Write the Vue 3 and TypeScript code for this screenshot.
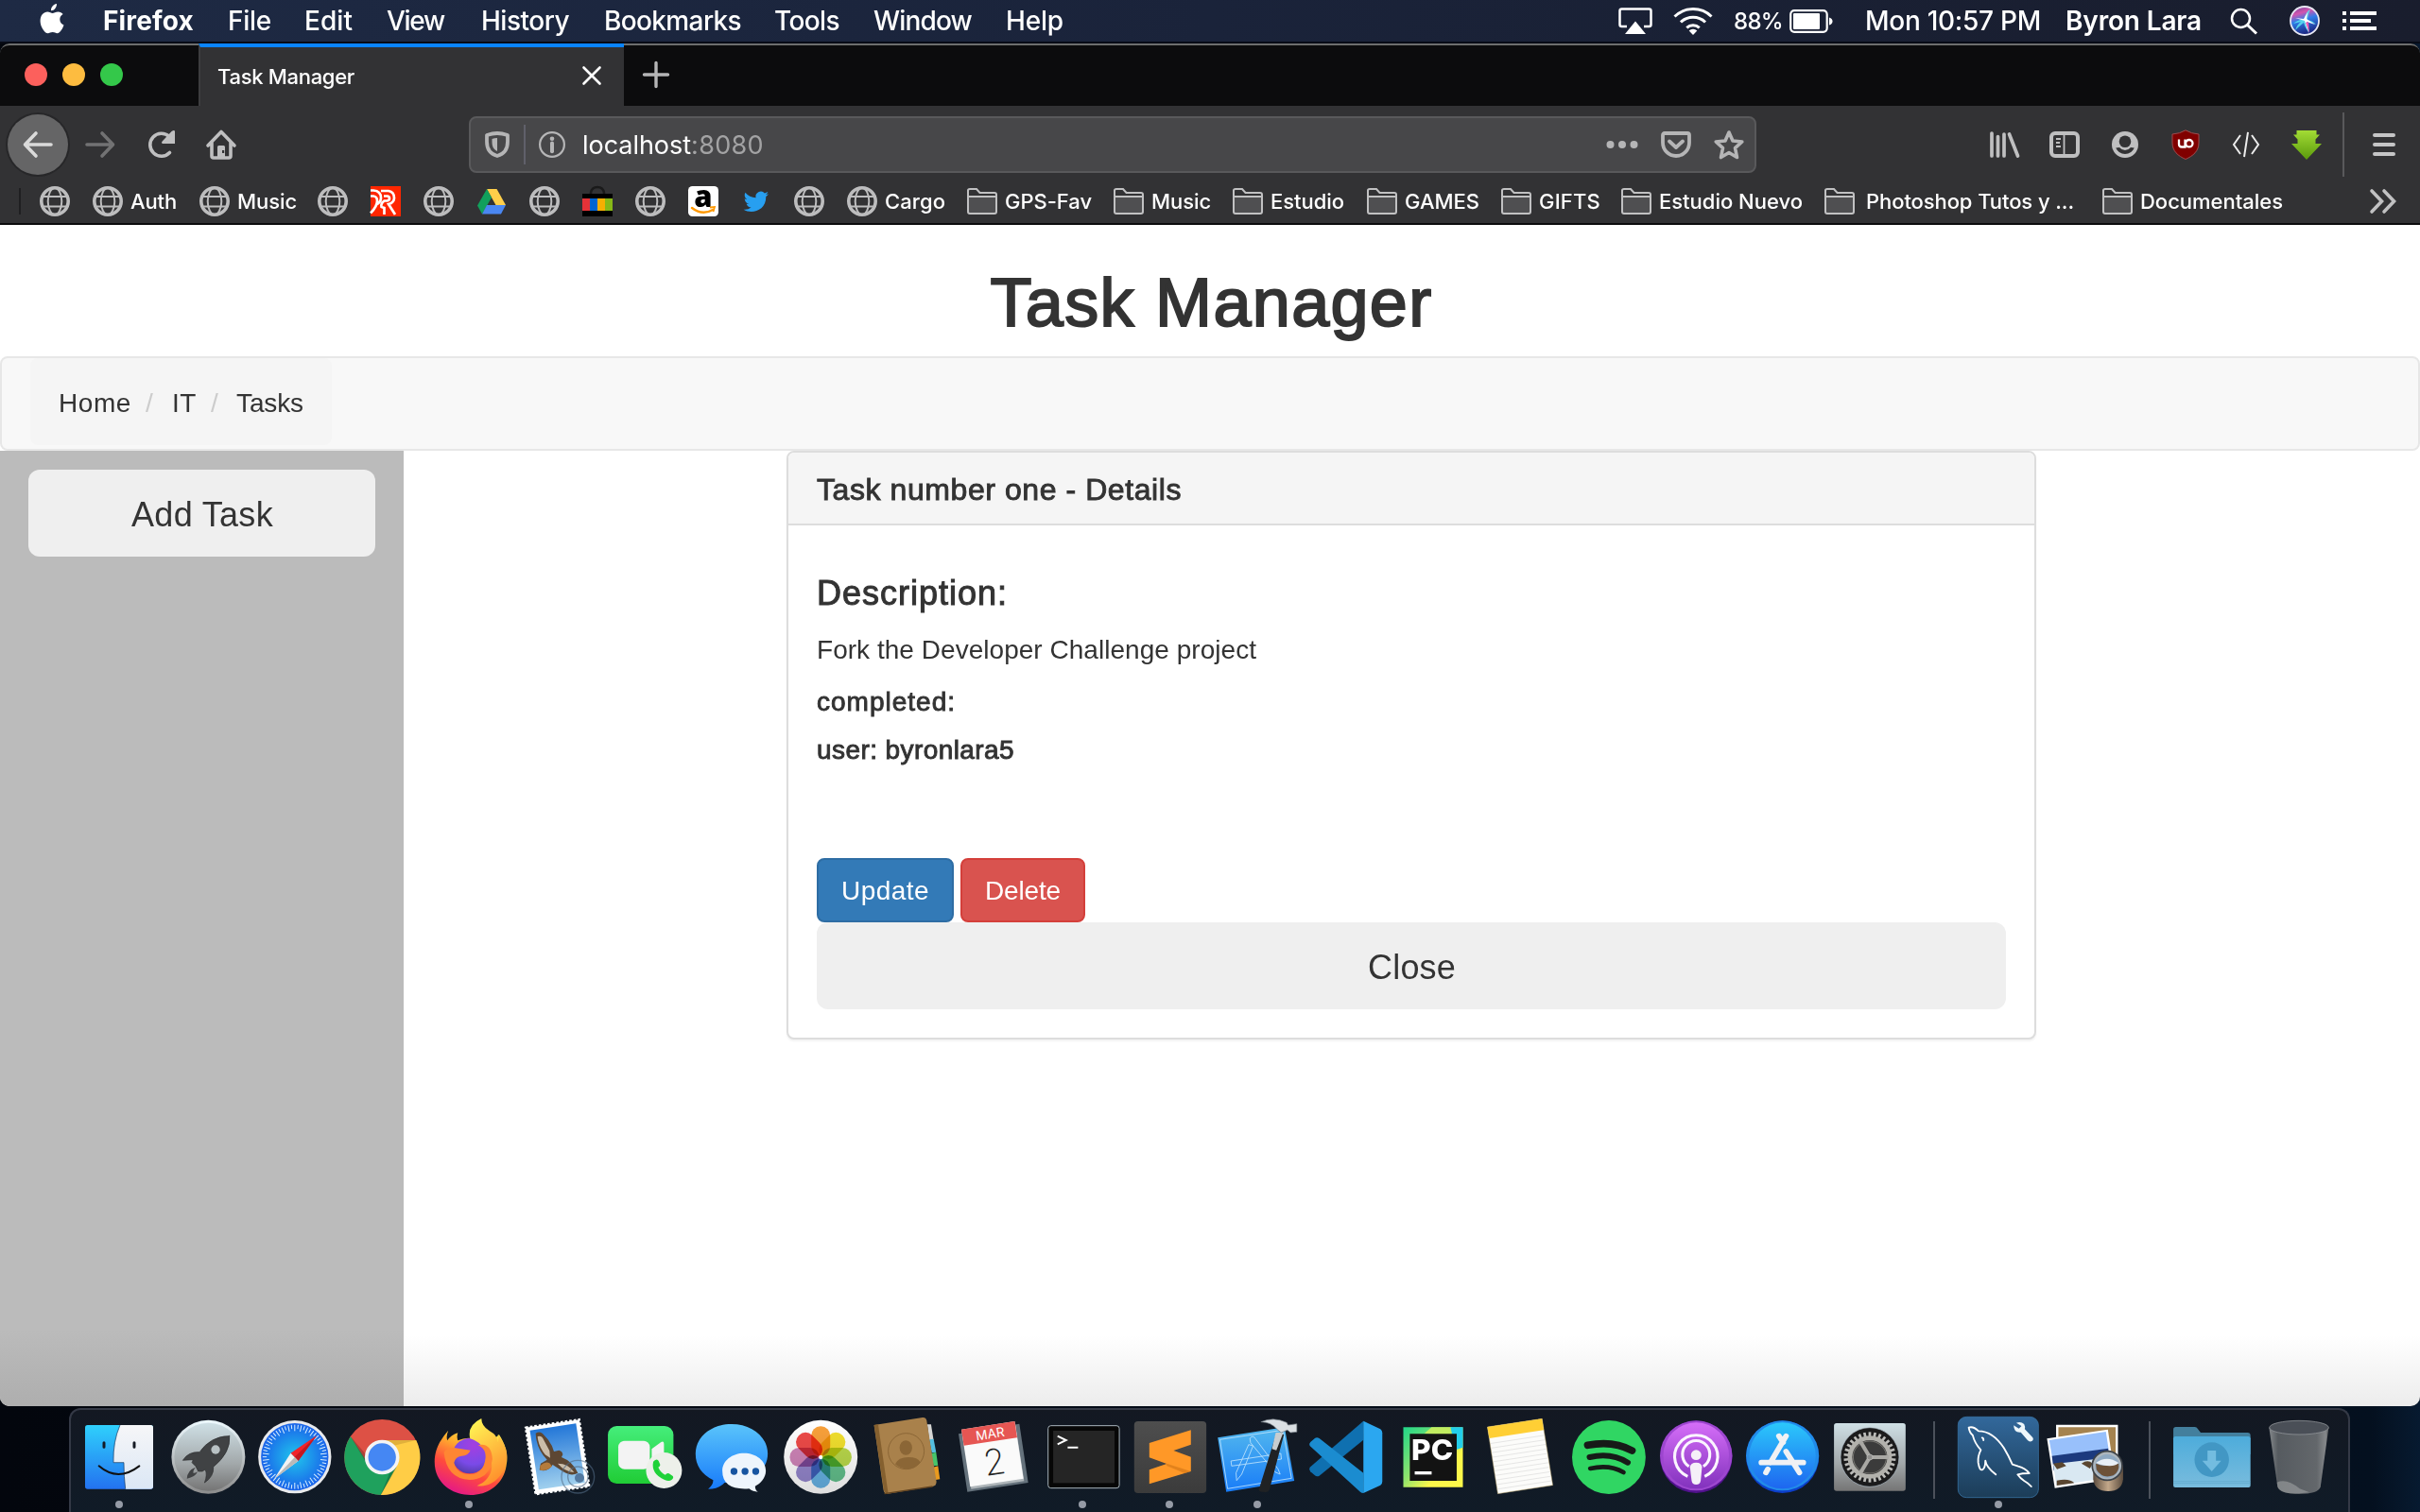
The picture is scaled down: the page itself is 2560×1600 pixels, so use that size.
<script setup lang="ts">
interface MenuItem {
  label: string
  width: number
  slot: number
}

interface Bookmark {
  icon: string
  pitch: number
  label?: string
  width?: number
  indent?: number
}

const menus: MenuItem[] = [
  { label: 'Firefox', width: 96, slot: 132 },
  { label: 'File', width: 46, slot: 81 },
  { label: 'Edit', width: 51, slot: 87 },
  { label: 'View', width: 61, slot: 100 },
  { label: 'History', width: 93, slot: 130 },
  { label: 'Bookmarks', width: 145, slot: 180 },
  { label: 'Tools', width: 69, slot: 105 },
  { label: 'Window', width: 104, slot: 140 },
  { label: 'Help', width: 61, slot: 70 },
]

const bookmarks: Bookmark[] = [
  { icon: 'globe', pitch: 56 },
  { icon: 'globe', pitch: 113, label: 'Auth', width: 49 },
  { icon: 'globe', pitch: 125, label: 'Music', width: 63 },
  { icon: 'globe', pitch: 56 },
  { icon: 'rr', pitch: 56 },
  { icon: 'globe', pitch: 56 },
  { icon: 'drive', pitch: 56 },
  { icon: 'globe', pitch: 56 },
  { icon: 'ebay', pitch: 56 },
  { icon: 'globe', pitch: 56 },
  { icon: 'amazon', pitch: 56 },
  { icon: 'twitter', pitch: 56 },
  { icon: 'globe', pitch: 56 },
  { icon: 'globe', pitch: 127, label: 'Cargo', width: 64 },
  { icon: 'folder', pitch: 155, label: 'GPS-Fav', width: 92 },
  { icon: 'folder', pitch: 126, label: 'Music', width: 63 },
  { icon: 'folder', pitch: 142, label: 'Estudio', width: 78 },
  { icon: 'folder', pitch: 142, label: 'GAMES', width: 79 },
  { icon: 'folder', pitch: 127, label: 'GIFTS', width: 65 },
  { icon: 'folder', pitch: 215, label: 'Estudio Nuevo', width: 152 },
  { icon: 'folder', pitch: 294, label: 'Photoshop Tutos y ...', width: 220, indent: 4 },
  { icon: 'folder', pitch: 200, label: 'Documentales', width: 151 },
]

const crumbs: MenuItem[] = [
  { label: 'Home', width: 77, slot: 92 },
  { label: '/', width: 9, slot: 28 },
  { label: 'IT', width: 26, slot: 41 },
  { label: '/', width: 9, slot: 27 },
  { label: 'Tasks', width: 71, slot: 71 },
]

const safariTicks = Array.from({ length: 60 }, (_, i) => i * 6)
const gearTeeth = Array.from({ length: 30 }, (_, i) => i * 12)
const petals = [
  ['#f9a13a', 0], ['#f2e02e', 45], ['#b9d84a', 90], ['#63c08c', 135],
  ['#66b2e4', 180], ['#9486cc', 225], ['#cf84b8', 270], ['#ee4a48', 315],
] as const

// Tracks a label out (or in) until it spans the given width.
const vFit = {
  mounted(el: HTMLElement, binding: { value: number }) {
    const natural = el.getBoundingClientRect().width
    const count = (el.textContent ?? '').trim().length
    if (count > 0) el.style.letterSpacing = `${(binding.value - natural) / count}px`
  },
}
</script>

<template>
  <div class="desktop">
    <header class="menubar">
      <svg class="apple" viewBox="0 0 26 32">
        <path fill="#fff" d="M18 0c.3 3.400-2.600 7.300-6 7.300C11.700 3.800 14.700.4 18 0zM24.600 11c-2 1.200-3.300 3.100-3.300 5.600 0 2.900 1.700 5 4.200 6-1 3.200-3.900 8.700-6.900 8.700-1.900 0-2.600-1.200-4.900-1.200-2.300 0-3.200 1.200-5 1.200C5.300 31.300.6 24.400.6 18.200.6 12 4.400 8.600 8.200 8.600c2.300 0 4 1.500 5.400 1.500 1.300 0 3.300-1.600 6-1.600 2 0 3.900.9 5 2.500z" />
      </svg>
      <nav class="menus">
        <span v-for="(m, i) in menus" :key="m.label" class="slot" :style="{ width: m.slot + 'px' }">
          <span v-fit="m.width" :class="{ strong: i === 0 }">{{ m.label }}</span>
        </span>
      </nav>
      <div class="status">
        <svg class="airplay" viewBox="0 0 36 28"><path d="M9 20H3.500Q1.500 20 1.500 18V3.500Q1.500 1.500 3.500 1.500h29q2 0 2 2V18q0 2-2 2H27" fill="none" stroke="#fff" stroke-width="2.500" /><path d="M18 14.500 29 28H7z" fill="#fff" /></svg>
        <svg class="wifi" viewBox="0 0 42 30"><g fill="none" stroke="#fff" stroke-width="3"><path d="M1.500 10.500a28 28 0 0 1 39 0" /><path d="M8 16.500a19 19 0 0 1 26 0" /><path d="M14.300 22.300a10 10 0 0 1 13.400 0" /></g><path d="M21 30l-4.300-4.600a6.500 6.500 0 0 1 8.600 0z" fill="#fff" /></svg>
        <span class="percent" v-fit="52">88%</span>
        <svg class="battery" viewBox="0 0 46 25"><rect x="1.200" y="1.200" width="38.500" height="22.600" rx="4" fill="none" stroke="#fff" stroke-width="2.200" /><rect x="4" y="4" width="28" height="17" rx="1" fill="#fff" /><path d="M42 8.500q3.500 1 3.500 4t-3.500 4z" fill="#fff" /></svg>
        <span class="clock" v-fit="186">Mon 10:57 PM</span>
        <span class="user" v-fit="144">Byron Lara</span>
        <svg class="search" viewBox="0 0 30 29"><circle cx="11.500" cy="11.500" r="9.500" fill="none" stroke="#fff" stroke-width="2.500" /><path d="M18.500 18.500 28 27.500" stroke="#fff" stroke-width="3" /></svg>
        <svg class="siri" viewBox="0 0 32 32">
          <defs><linearGradient id="siri" x1="0" y1="0" x2=".3" y2="1"><stop offset="0" stop-color="#5b3f9c" /><stop offset=".3" stop-color="#d455ae" /><stop offset=".55" stop-color="#2f7dea" /><stop offset="1" stop-color="#1c2a86" /></linearGradient></defs>
          <circle cx="16" cy="16" r="15" fill="url(#siri)" stroke="#e8e8f4" stroke-width="1.800" />
          <path d="M4 19q7-5 11-4Q18 5 22 4q-3 7-3 11 6 1 9 5-6-3-10-3 1 7 3 12-5-6-6-11-5 4-9 8 2-6 6-9z" fill="#5de3ee" opacity=".85" /><path d="m16 16 4 13-2-12 9 3-9-6 1-7-4 7-9-1z" fill="#fff" /><path d="m17 18 4 11-1-12z" fill="#f05ab6" />
        </svg>
        <svg class="list" viewBox="0 0 36 20"><path fill="#fff" d="M0 0h4v4H0zM0 8h4v4H0zM0 16h4v4H0zM8 0h28v4H8zM8 8h22v4H8zM8 16h28v4H8z" /></svg>
      </div>
    </header>

    <main class="window">
      <div class="tabstrip">
        <div class="lights"><i class="red"></i><i class="amber"></i><i class="green"></i></div>
        <div class="tab">
          <span v-fit="145">Task Manager</span>
          <svg class="tabclose" viewBox="0 0 20 20"><path d="m1.500 1.500 17 17m0-17-17 17" stroke="#fff" stroke-width="2.600" stroke-linecap="round" /></svg>
        </div>
        <svg class="plus" viewBox="0 0 28 28"><path d="M14 1.500v25M1.500 14h25" stroke="#b5b5b6" stroke-width="3.400" stroke-linecap="round" /></svg>
      </div>

      <div class="toolbar">
        <span class="back"><svg viewBox="0 0 32 32"><path d="M30 16H3m11-12L2.500 16 14 28" class="line" stroke="#dadada" /></svg></span>
        <svg class="tool forward" viewBox="0 0 32 32"><path d="M2 16h27M18 4l11.500 12L18 28" class="line" stroke="#727273" /></svg>
        <svg class="tool reload" viewBox="0 0 32 32"><path d="M25.500 24.500A12 12 0 1 1 25 7.500" class="line" stroke="#bfbfc0" stroke-width="4" /><path d="M31 2.500V15H18.500c-1.800 0-1.800-1.500-.8-2.400L27.500 2q3.500-2 3.500.5z" fill="#bfbfc0" /></svg>
        <svg class="tool home" viewBox="0 0 32 32"><path d="M2 17 16 2.500 30 17M6 14v14q0 2 2 2h16q2 0 2-2V14" class="line" stroke="#bfbfc0" stroke-width="4" /><path d="M12 30V18.500q0-1.500 1.500-1.500h5q1.500 0 1.500 1.500V30z" fill="#bfbfc0" /><path d="M17 22h2.200v3H17z" fill="#323234" /></svg>

        <div class="urlbar">
          <svg class="shield" viewBox="0 0 26 28"><path d="M2 4Q8 2 13 2t11 2v7c0 8-4 13-11 15C6 24 2 19 2 11z" fill="none" stroke="#b5b5b6" stroke-width="3.800" stroke-linejoin="round" /><path d="M13 7v14c-4-2-5.500-5-5.500-10V8Q10 7 13 7z" fill="#b5b5b6" /></svg>
          <i class="divider"></i>
          <svg class="info" viewBox="0 0 28 28"><circle cx="14" cy="14" r="12.900" fill="none" stroke="#b5b5b6" stroke-width="2.200" /><circle cx="14" cy="7.700" r="2.300" fill="#b5b5b6" /><path d="M14 12.500v8.700" stroke="#b5b5b6" stroke-width="4" stroke-linecap="round" /></svg>
          <span class="host" v-fit="115">localhost</span><span class="port" v-fit="77">:8080</span>
          <svg class="dots" viewBox="0 0 34 10"><g fill="#b5b5b6"><circle cx="4.500" cy="5" r="4" /><circle cx="17" cy="5" r="4" /><circle cx="29.500" cy="5" r="4" /></g></svg>
          <svg class="pocket" viewBox="0 0 32 28"><path d="M4 2h24q2 0 2 2v8a14 14 0 0 1-28 0V4q0-2 2-2z" fill="none" stroke="#b5b5b6" stroke-width="3.800" /><path d="m9 10.500 7 6.500 7-6.500" fill="none" stroke="#b5b5b6" stroke-width="3.800" stroke-linecap="round" stroke-linejoin="round" /></svg>
          <svg class="star" viewBox="0 0 32 32"><path d="m16 3 4 9 9.800 1-7.300 6.600 2 9.900-8.500-5-8.500 5 2-9.900L2.200 13l9.800-1z" fill="none" stroke="#b5b5b6" stroke-width="3.600" stroke-linejoin="round" /></svg>
        </div>

        <svg class="library" viewBox="0 0 32 28"><g stroke="#bfbfc0" stroke-width="3.700" stroke-linecap="round"><path d="M2 2v24M8.500 5.500V26M15 3v23M20.500 3l9 23" /></g></svg>
        <svg class="side" viewBox="0 0 32 28"><rect x="2" y="2" width="28" height="24" rx="4" fill="none" stroke="#bfbfc0" stroke-width="4" /><path d="M15.500 3v22" stroke="#bfbfc0" stroke-width="1.800" /><path d="M7 8h5M7 12h4M7 16h5" stroke="#bfbfc0" stroke-width="2" /></svg>
        <svg class="account" viewBox="0 0 28 28"><circle cx="14" cy="14" r="14" fill="#bfbfc0" /><circle cx="14" cy="10.800" r="6.300" fill="#323234" /><path d="M4.200 17.500Q6 17 8 17q2.500 3 6 3t6-3q2 0 3.800.5-3 6.500-9.800 6.500t-9.800-6.500z" fill="#323234" /></svg>
        <svg class="ublock" viewBox="0 0 30 32"><path d="M15 .8Q21 4.500 29 5v9c0 9-6 14-14 17.500C7 28 1 23 1 14V5Q9 4.500 15 .8z" fill="#800000" stroke="#a04a4c" stroke-width="1" /><path d="M8 10.500v5q0 3 3 3h3.500v-8" fill="none" stroke="#fff" stroke-width="2.300" /><circle cx="18.800" cy="14.700" r="3.700" fill="none" stroke="#fff" stroke-width="2.300" /></svg>
        <svg class="code" viewBox="0 0 30 28"><path d="M9 4 2 14l7 10M21 4l7 10-7 10M17 .8 13 27" fill="none" stroke="#ececec" stroke-width="2" /></svg>
        <svg class="green-arrow" viewBox="0 0 32 31"><defs><linearGradient id="ga" x1="0" y1="0" x2="0" y2="1"><stop offset="0" stop-color="#a3dc35" /><stop offset="1" stop-color="#5a9a0c" /></linearGradient></defs><path d="M5.500 0h21v4.500H30l-4.500 5v4.500H32L16 31 0 14h6.500V9.500L2 4.500h3.500z" fill="url(#ga)" /></svg>
        <i class="tooldivider"></i>
        <svg class="burger" viewBox="0 0 24 24"><path d="M2 2h20M2 12h20M2 22h20" stroke="#c5c5c6" stroke-width="4" stroke-linecap="round" /></svg>
      </div>

      <div class="bookmarks">
        <i class="bmdivider"></i>
        <div v-for="(b, i) in bookmarks" :key="i" class="bookmark" :style="{ width: b.pitch + 'px' }">
          <svg v-if="b.icon === 'globe'" viewBox="0 0 32 32"><g fill="none" stroke="#bdbdbe" stroke-width="2"><circle cx="16" cy="16" r="14.200" stroke-width="3.600" /><ellipse cx="16" cy="16" rx="7.300" ry="14" /><path d="M3 11h26M3 21.500h26" /></g></svg>
          <svg v-else-if="b.icon === 'folder'" viewBox="0 0 32 32"><path d="M1 10.500h30V27q0 2-2 2H3q-2 0-2-2z" fill="#4f4f51" /><path d="M1 27V4.500Q1 3 3 3h7l3.500 4H29q2 0 2 2v18q0 2-2 2H3q-2 0-2-2zM1 11h30" fill="none" stroke="#c1c1c2" stroke-width="2" /></svg>
          <svg v-else-if="b.icon === 'rr'" viewBox="0 0 32 32"><path fill="#ff2600" d="M0 0h32v32H0z" /><g fill="none" stroke="#fff" stroke-width="2.700"><path d="M0 4.500h3q8 .5 8 8 0 4-4 6.500M0 10.500h3q4 .5 4 5 0 6-7 13M11 5h8q6 1 6 7.500 0 5-6 6.500L26 30M14 10.500h4q2 .5 2 2.500t-2.500 2.500h-3q-4 3-3 6.500l3 1V30" /></g></svg>
          <svg v-else-if="b.icon === 'drive'" viewBox="0 0 32 32"><path d="M11 3h10.500L31 20H20.500z" fill="#ffcf4a" /><path d="M11 3 1 20.500 6 29.500 16 12z" fill="#11a05c" /><path d="M11 20h20l-5 9.500H6z" fill="#4a87f2" /></svg>
          <svg v-else-if="b.icon === 'ebay'" viewBox="0 0 32 32"><path d="M9 10V7q1-6 7-6t7 6v3" fill="none" stroke="#1a1a1a" stroke-width="2.500" /><path fill="#000" d="M0 8h32v24H0z" /><path fill="#e53238" d="M0 13h8v13H0z" /><path fill="#0064d2" d="M8 13h8v13H8z" /><path fill="#f5af02" d="M16 13h8v13h-8z" /><path fill="#86b817" d="M24 13h8v13h-8z" /></svg>
          <svg v-else-if="b.icon === 'amazon'" viewBox="0 0 32 32"><rect width="32" height="32" rx="4.500" fill="#fff" /><text x="16" y="22" text-anchor="middle" font-family="Open Sans, sans-serif" font-weight="800" font-size="31">a</text><path d="M4 23q11 8.500 22 2" fill="none" stroke="#f90" stroke-width="2.500" stroke-linecap="round" /><path d="m23 22.500 5-.5-1.500 5" fill="none" stroke="#f90" stroke-width="1.800" /></svg>
          <svg v-else viewBox="0 0 32 32"><path d="M29 8.200c-1 .4-2 .7-3.100.9 1.100-.7 2-1.700 2.400-3-1 .6-2.200 1.100-3.400 1.300a5.400 5.400 0 0 0-9.300 4.900C11.100 12.100 7.100 10 4.400 6.700c-1.400 2.400-.7 5.600 1.700 7.200-.9 0-1.700-.3-2.400-.7 0 2.600 1.800 4.800 4.300 5.400-.8.2-1.600.2-2.400.1.700 2.200 2.700 3.700 5 3.800A10.800 10.800 0 0 1 2.600 24.700c8 5.100 23.800 1.900 23.700-13.700 1.100-.8 2-1.700 2.700-2.800z" fill="#279ff0" /></svg>
          <span v-if="b.label" v-fit="b.width ?? 0" :class="{ indented: b.indent }">{{ b.label }}</span>
        </div>
        <svg class="more" viewBox="0 0 28 26"><path d="m2 2 10.500 11L2 24M15 2l10.500 11L15 24" fill="none" stroke="#c1c1c2" stroke-width="3.600" stroke-linecap="round" /></svg>
      </div>

      <div class="page">
        <h1><span v-fit="468">Task Manager</span></h1>
        <nav class="navbar">
          <div class="breadcrumb">
            <span v-for="(c, i) in crumbs" :key="i" class="slot" :style="{ width: c.slot + 'px' }"><span v-fit="c.width" :class="{ slash: c.label === '/' }">{{ c.label }}</span></span>
          </div>
        </nav>
        <div class="columns">
          <aside class="sidebar"><button class="big"><span v-fit="150">Add Task</span></button></aside>
          <section class="panel">
            <div class="panel-heading"><span v-fit="386">Task number one - Details</span></div>
            <div class="panel-body">
              <h3><span v-fit="202">Description:</span></h3>
              <p><span v-fit="465">Fork the Developer Challenge project</span></p>
              <h5><span v-fit="147">completed:</span></h5>
              <h5 class="owner"><span v-fit="209">user: byronlara5</span></h5>
              <div class="actions">
                <button class="btn update"><span v-fit="93">Update</span></button>
                <button class="btn delete"><span v-fit="80">Delete</span></button>
              </div>
              <button class="big"><span v-fit="93">Close</span></button>
            </div>
          </section>
        </div>
      </div>
    </main>

    <footer class="dock">
      <svg width="0" height="0" class="defs">
        <defs>
          <linearGradient id="fd1" x1="0" y1="0" x2="0" y2="1"><stop offset="0" stop-color="#2fd0fc" /><stop offset="1" stop-color="#2372f0" /></linearGradient>
          <linearGradient id="fd2" x1="0" y1="0" x2="0" y2="1"><stop offset="0" stop-color="#f6f6f8" /><stop offset="1" stop-color="#dbe7f5" /></linearGradient>
          <linearGradient id="gray" x1="0" y1="0" x2="0" y2="1"><stop offset="0" stop-color="#cfe0e6" /><stop offset=".6" stop-color="#a2a8aa" /><stop offset="1" stop-color="#757575" /></linearGradient>
          <linearGradient id="rim" x1="0" y1="0" x2="0" y2="1"><stop offset="0" stop-color="#eefaff" /><stop offset="1" stop-color="#8c8c8c" /></linearGradient>
          <radialGradient id="saf"><stop offset="0" stop-color="#20c6ec" /><stop offset="1" stop-color="#1a63ea" /></radialGradient>
          <linearGradient id="fx" x1=".8" y1="0" x2=".3" y2="1"><stop offset="0" stop-color="#fff44f" /><stop offset=".35" stop-color="#ffac2d" /><stop offset=".65" stop-color="#ff4a3d" /><stop offset="1" stop-color="#e3168b" /></linearGradient>
          <linearGradient id="fy" x1=".3" y1="0" x2=".7" y2="1"><stop offset="0" stop-color="#fff153" /><stop offset="1" stop-color="#ff8a2a" /></linearGradient>
          <radialGradient id="fp" cx=".6" cy=".2" r=".9"><stop offset="0" stop-color="#a43fe0" /><stop offset=".6" stop-color="#7a4ae8" /><stop offset="1" stop-color="#4a3a9a" /></radialGradient>
          <linearGradient id="sky" x1="0" y1="0" x2="0" y2="1"><stop offset="0" stop-color="#2377d8" /><stop offset="1" stop-color="#a0d0ee" /></linearGradient>
          <linearGradient id="ft" x1="0" y1="0" x2="0" y2="1"><stop offset="0" stop-color="#45ee7b" /><stop offset="1" stop-color="#20cc35" /></linearGradient>
          <linearGradient id="msg" x1="0" y1="0" x2="0" y2="1"><stop offset="0" stop-color="#5ac4fb" /><stop offset="1" stop-color="#187bfa" /></linearGradient>
          <linearGradient id="white" x1="0" y1="0" x2="0" y2="1"><stop offset="0" stop-color="#fff" /><stop offset="1" stop-color="#dedede" /></linearGradient>
          <linearGradient id="sub" x1="0" y1="0" x2="0" y2="1"><stop offset="0" stop-color="#4e4e4e" /><stop offset="1" stop-color="#3b3b3b" /></linearGradient>
          <linearGradient id="xc" x1="0" y1="0" x2="0" y2="1"><stop offset="0" stop-color="#53b8ee" /><stop offset="1" stop-color="#187cf8" /></linearGradient>
          <linearGradient id="pc" x1="0" y1="0" x2="1" y2="1"><stop offset="0" stop-color="#21d789" /><stop offset=".45" stop-color="#8fe36c" /><stop offset=".7" stop-color="#fcf84a" /></linearGradient>
          <linearGradient id="pod" x1="0" y1="0" x2="0" y2="1"><stop offset="0" stop-color="#d56ef8" /><stop offset="1" stop-color="#8232bd" /></linearGradient>
          <linearGradient id="as" x1="0" y1="0" x2="0" y2="1"><stop offset="0" stop-color="#2bc8fb" /><stop offset="1" stop-color="#1e66f0" /></linearGradient>
          <linearGradient id="my" x1="0" y1="0" x2="0" y2="1"><stop offset="0" stop-color="#32689b" /><stop offset="1" stop-color="#1c3d58" /></linearGradient>
          <linearGradient id="dl" x1="0" y1="0" x2="0" y2="1"><stop offset="0" stop-color="#4dacdb" /><stop offset="1" stop-color="#79bcdd" /></linearGradient>
          <linearGradient id="tr" x1="0" y1="0" x2="1" y2="0"><stop offset="0" stop-color="#85898c" /><stop offset=".15" stop-color="#565b60" /><stop offset=".8" stop-color="#63676b" /><stop offset=".95" stop-color="#85888b" /><stop offset="1" stop-color="#5a5d60" /></linearGradient>
          <linearGradient id="can" x1="0" y1="0" x2="1" y2="0"><stop offset="0" stop-color="#5b4c3e" /><stop offset=".5" stop-color="#c3a88a" /><stop offset="1" stop-color="#5b4c3e" /></linearGradient>
        </defs>
      </svg>

      <div class="app running">
        <svg viewBox="54 72 288 288"><rect x="90" y="114" width="216" height="203" rx="8" fill="url(#fd1)" /><path d="M201 114h97q8 0 8 8v187q0 8-8 8h-80q-5-38-5-84h-33q-2-66 21-119z" fill="url(#fd2)" /><path d="M201 114q-23 53-21 119h33q0 46 5 84" fill="none" stroke="#14355c" stroke-width="2" /><path d="M150 170v14M246 170v14" stroke="#151a24" stroke-width="9" stroke-linecap="round" /><path d="M134 244q60 52 128 0" fill="none" stroke="#111" stroke-width="6" stroke-linecap="round" /></svg>
      </div>
      <div class="app">
        <svg viewBox="331.800 72 288 288"><circle cx="480" cy="215" r="117" fill="url(#rim)" /><circle cx="480" cy="215" r="108" fill="url(#gray)" /><path d="M548 148q-62 2-96 52-36-2-53 26l31-2q2 3-2 9l12 12 8 16 13 0 9-6q8 16-2 42 30-20 28-50 56-46 51-99z" fill="#404244" stroke="#2c2d2f" stroke-width="2" /><circle cx="503" cy="192" r="14" fill="#b8c1c4" /><path d="M439 248q-26 10-27 36 26-4 34-22-10 6-14 4 0-10 7-18z" fill="#404244" /></svg>
      </div>
      <div class="app">
        <svg viewBox="609.600 72 288 288"><circle cx="756" cy="215" r="116" fill="#e9eaec" /><circle cx="756" cy="215" r="107" fill="url(#saf)" /><g stroke="#d9efff" stroke-width="3"><path v-for="t in safariTicks" :key="t" :d="t % 12 ? 'M756 113v13' : 'M756 113v20'" :transform="`rotate(${t} 756 215)`" /></g><path d="m826 147-83 56 24 25z" fill="#f0232b" /><path d="m826 147-70 68 11 13z" fill="#c31820" /><path d="m690 286 53-83 24 25z" fill="#f2f2f2" /><path d="m690 286 66-70 11 12z" fill="#b9b9b9" /></svg>
      </div>
      <div class="app">
        <svg viewBox="887.400 72 288 288"><circle cx="1032" cy="216" r="120" fill="#dd5145" /><path d="M932 150a120 120 0 0 0 96 186l51-90-87-4z" fill="#1fa15d" /><path d="M1028 336A120 120 0 0 0 1140 162h-108l47 80z" fill="#ffcd46" /><path d="m1032 162 108 0-70 17z" fill="#a87b28" opacity=".35" /><path d="m932 150 47 80 2-22z" fill="#60201c" opacity=".35" /><path d="m1028 336 51-90-20 12z" fill="#0d4f2c" opacity=".4" /><circle cx="1032" cy="216" r="55" fill="#f4f4f4" /><circle cx="1032" cy="216" r="44" fill="#4587f3" /></svg>
      </div>
      <div class="app running">
        <svg viewBox="1165.200 72 288 288"><path d="M1244 131q-8 18-3 32 12-18 33-24-4 12 0 24 40-18 80 6 40-10 51-25 32 50 24 92c-14 130-200 130-226 20-10-50 10-90 41-125z" fill="url(#fx)" /><circle cx="1312" cy="212" r="56" fill="url(#fp)" /><path d="M1313 157q-10-42 36-64 0 24 26 40 26 14 26 36 4-14 0-26 38 50 26 88c-14 64-60 80-92 76 46-20 66-70 24-116q-20-28-46-34z" fill="url(#fy)" /><path d="M1230 200q10-14 32-14l52 8q-6 16-28 18-20 2-24 22 10 36 50 36 44 0 50-52 2-30-24-40 42-10 46 44-8 64-72 66-74-4-82-88z" fill="#ff8633" /></svg>
      </div>
      <div class="app">
        <svg viewBox="3 72 288 288"><g transform="rotate(-8.500 149 215)"><rect x="63" y="108" width="172" height="214" fill="#fff" stroke="#fff" stroke-width="7" stroke-dasharray="8 6" /><rect x="75" y="119" width="148" height="190" fill="url(#sky)" /></g><path d="M80 140q16-10 28 8 24 24 30 50l16-4q12 4 12 14l-4 8q36 14 52 50-24 14-56-10l-24-16q-18 26-42 16l4-20 20-12Q82 190 80 140z" fill="#5d4733" /><path d="M86 150q14-4 20 12l18 34 2 22-16-10q-22-28-24-58zM150 236q34 0 52 28-30-2-52-28z" fill="#cbbda9" /><path d="M94 243q16-16 30-8l8 10q-18 16-38 12z" fill="#b47b3c" /><g fill="none" stroke="#526b85" stroke-width="4" opacity=".6"><circle cx="214" cy="278" r="32" /><circle cx="214" cy="278" r="52" /></g><circle cx="219" cy="282" r="15" fill="#42648c" opacity=".8" /></svg>
      </div>
      <div class="app">
        <svg viewBox="280.800 72 288 288"><rect x="308" y="117" width="208" height="183" rx="28" fill="url(#ft)" /><rect x="341" y="164" width="100" height="90" rx="20" fill="#f3f3f3" /><path d="m447 190 30-22q9-4 9 6v66q-24-4-39-14z" fill="#f3f3f3" /><circle cx="486" cy="258" r="57" fill="#edf0ea" /><path d="M457 226q8-6 12 2l5 12q0 5-6 8 6 16 22 24 6-8 12-4l12 8q4 6-4 12-8 6-22 0-44-20-36-58z" fill="#1fd238" /></svg>
      </div>
      <div class="app">
        <svg viewBox="558.600 72 288 288"><path d="M702 111c64 0 115 40 115 94s-50 91-115 92h-22q-20 20-52 20 16-12 16-28-56-28-56-84c0-54 50-94 114-94z" fill="url(#msg)" /><path d="M742 203c38 0 69 24 69 56 0 24-18 42-34 49q0 12 9 18-16 0-28-10-85 6-85-57c0-32 31-56 69-56z" fill="#eef5fc" /><g fill="#1755a1"><circle cx="710" cy="261" r="11" /><circle cx="745" cy="261" r="11" /><circle cx="779" cy="261" r="11" /></g></svg>
      </div>
      <div class="app">
        <svg viewBox="836.400 72 288 288"><circle cx="984" cy="215" r="117" fill="url(#white)" /><g class="petals"><rect v-for="[color, angle] in petals" :key="angle" x="954" y="118" width="60" height="93" rx="29" :fill="color" :transform="`rotate(${angle} 984 216)`" /></g><circle cx="984" cy="216" r="6" fill="#fff" /></svg>
      </div>
      <div class="app">
        <svg viewBox="1114.200 72 288 288"><path d="m1324 112 12 0 8 50-14 0z" fill="#d6d6d4" /><path d="m1330 160 14-2 8 42-14 2z" fill="#55bfe0" /><path d="m1336 204 16-4 6 42-14 2z" fill="#45c46a" /><path d="m1342 248 16-4 6 42-14 2z" fill="#e89a1f" /><path d="m1155 114 154-24q11-1 13 10l31 194q0 12-12 15l-142 23q-12 1-14-12z" fill="#a9814b" /><path d="m1155 114 13-2 32 219q-12 1-14-12z" fill="#85602f" /><path d="m1188 332 153-23" stroke="#614320" stroke-width="4" /><circle cx="1257" cy="197" r="57" fill="none" stroke="#8b6636" stroke-width="3" /><ellipse cx="1256" cy="186" rx="20" ry="23" fill="#8b6636" /><path d="M1222 238q10-22 42-22 30 0 38 16-16 22-42 22-22-2-38-16z" fill="#8b6636" /></svg>
      </div>
      <div class="app">
        <svg viewBox="-48 72 288 288"><path d="m-18 142 193-32 28 187-193 29z" fill="#65727c" /><g transform="rotate(-8.700 90 206)"><rect x="6" y="122" width="170" height="184" fill="#aeb5b9" /><rect x="4" y="114" width="171" height="184" fill="#fafafa" /><rect x="4" y="114" width="171" height="52" fill="#e65653" /><text x="92" y="156" text-anchor="middle" font-size="41" fill="#fff">MAR</text><text x="92" y="272" text-anchor="middle" font-size="113" font-weight="200" fill="#222">2</text></g></svg>
      </div>
      <div class="app running">
        <svg viewBox="229.800 72 288 288"><rect x="265" y="116" width="226" height="198" rx="9" fill="#070707" stroke="#a9b5bd" stroke-width="3" /><rect x="281" y="132" width="195" height="166" fill="#252525" /><path d="m295 149 27 13-27 13M327 185h33" fill="none" stroke="#fff" stroke-width="6" /></svg>
      </div>
      <div class="app running">
        <svg viewBox="507.600 72 288 288"><rect x="540" y="102" width="229" height="228" rx="12" fill="url(#sub)" /><path d="m588 171 132-41v46l-55 19 55 20v46l-132 40v-45l55-19-55-20z" fill="#ff9827" /><path d="m643 236 77 25-20 6-57-24z" fill="#c66c12" opacity=".5" /></svg>
      </div>
      <div class="app running">
        <svg viewBox="785.400 72 288 288"><path d="m804 154 212-33 31 170-216 35z" fill="url(#xc)" /><g fill="none" stroke="#c0e5fc" stroke-width="2.500"><path d="m811 160 200-30 27 153-203 33zM846 228l158-24 2 18-158 22zM902 176l14 4-36 90-16 20-2-24zM906 156q10-12 18 2l60 80q14 16 18 32-18-4-26-18l-68-82z" /></g><path d="m990 140 24 4-46 176q-6 10-18 6-14 0-16-6z" fill="#202224" /><path d="m988 138 24 0-22 56-14-4z" fill="#c8cdd0" /><path d="M941 104q40-18 82 2l4 8 28-4v26l-20 2-10-8-20 8-12-10q-20-24-52-24z" fill="#dadfe3" stroke="#6f7880" stroke-width="2" /></svg>
      </div>
      <div class="app">
        <svg viewBox="1063.200 72 288 288"><path d="m1098 248 170-147v60l-140 114q-8 4-14-1l-14-12q-6-8-2-14z" fill="#0f70b0" /><path d="M1098 180q-4-6 2-12l14-12q6-4 14 0l140 110v64q-6 0-10-4z" fill="#1b8cd0" /><path d="m1268 101 54 26q6 4 6 12v154q0 8-6 12l-54 25z" fill="#2ba7f0" /></svg>
      </div>
      <div class="app">
        <svg preserveAspectRatio="none" viewBox="-95.800 72 278.800 288"><path d="M-45 121h183v190H-45z" fill="url(#pc)" /><path d="m20 140 22-19h62v30z" fill="#c2ec60" /><path d="M100 121h38v64l-22 8z" fill="#23ceea" /><path d="M-25 142h144v149H-25z" fill="#131313" /><text x="-20" y="226" font-size="91" font-weight="800" textLength="128" lengthAdjust="spacingAndGlyphs" fill="#fff">PC</text><path d="M-10 266h52" stroke="#fff" stroke-width="10" /></svg>
      </div>
      <div class="app">
        <svg preserveAspectRatio="none" viewBox="173.100 72 278.800 288"><path d="m215 120 168-26 33 211-169 27z" fill="#fcfcfa" stroke="#b09a60" stroke-width="1.500" /><path d="m215 120 168-26 5 36-167 26z" fill="#ffcf35" /><path v-for="n in 11" :key="n" d="m223 158 165-26" :transform="`translate(${n * 2} ${n * 14.500})`" stroke="#cfcfcf" stroke-width="1.500" /></svg>
      </div>
      <div class="app">
        <svg preserveAspectRatio="none" viewBox="442 72 278.800 288"><ellipse cx="587" cy="216" rx="113" ry="117" fill="#30d663" /><g fill="none" stroke="#171a18" stroke-linecap="round"><path d="M522 178q78-16 136 17" stroke-width="23" /><path d="M528 216q66-16 117 17" stroke-width="18" /><path d="M530 252q58-14 102 12" stroke-width="14" /></g></svg>
      </div>
      <div class="app">
        <svg preserveAspectRatio="none" viewBox="710.900 72 278.800 288"><ellipse cx="854" cy="215" rx="111" ry="115" fill="#51128d" /><ellipse cx="854" cy="211" rx="111" ry="111" fill="#9d46cf" /><ellipse cx="854" cy="211" rx="101" ry="105" fill="url(#pod)" /><g fill="none" stroke="#fbf5ff" stroke-width="9"><path d="M828 277a66 68 0 1 1 52 0" /><path d="M832 245a42 44 0 1 1 44 0" /></g><circle cx="854" cy="209" r="16" fill="#f5f0f8" /><path d="M835 247q2-14 19-14t18 14l-4 43q-2 13-14 13t-14-13z" fill="#f5f0f8" /></svg>
      </div>
      <div class="app">
        <svg preserveAspectRatio="none" viewBox="979.800 72 278.800 288"><ellipse cx="1121" cy="215" rx="112" ry="115" fill="#0d3fca" /><ellipse cx="1121" cy="211" rx="112" ry="111" fill="#218be9" /><ellipse cx="1121" cy="211" rx="102" ry="105" fill="url(#as)" /><g stroke="#f0f1f4" stroke-linecap="round" stroke-width="17"><path d="M1132 149 1084 233M1110 149l13 20M1132 198l41 67M1056 233h129M1076 254l-6 11" /></g></svg>
      </div>
      <div class="app">
        <svg preserveAspectRatio="none" viewBox="1248.700 72 278.800 288"><rect x="1278" y="108" width="220" height="215" rx="8" fill="url(#gray)" /><ellipse cx="1388" cy="216" rx="90" ry="94" fill="#1b1b1c" stroke="#b4c1cb" stroke-width="2" /><g stroke="#bcbcb9" stroke-width="8"><path v-for="a in gearTeeth" :key="a" d="M1388 136v15" :transform="`rotate(${a} 1388 216)`" /></g><circle cx="1388" cy="216" r="61" fill="#3b3b3b" stroke="#b2b1ac" stroke-width="14" /><circle cx="1388" cy="216" r="51" fill="none" stroke="#777671" stroke-width="3" /><path d="M1388 216h58M1388 216l-29-50M1388 216l-29 50" stroke="#a9a8a4" stroke-width="12" /><circle cx="1388" cy="216" r="9" fill="#91908e" stroke="#c5c5c2" stroke-width="2" /></svg>
      </div>
      <i class="sep"></i>
      <div class="app running">
        <svg preserveAspectRatio="none" viewBox="133.600 72 278.800 288"><rect x="149" y="88" width="247" height="256" rx="26" fill="url(#my)" stroke="#37709f" stroke-width="2.500" /><g fill="none" stroke="#fff" stroke-width="5.500" stroke-linejoin="round" stroke-linecap="round"><path d="M212 133q-16-16-30-11 2 16 12 24 6 26 25 47-10 20-8 40 4 28 14 22 8-6 8-28 2 20 32 44M212 133q44 0 78 54 14 24 26 52l18 6q22 6 34 22-22 0-36 4 8 12 20 20 14 8 22 18" /><path d="M223 154q5 2 4 8" /></g><path d="M328 107q14-6 24 4 4 8 2 16l22 24q8 8 0 14-8 4-14-4l-20-24q-22 2-22-22l16 10 8-8z" fill="#eef7fb" /></svg>
      </div>
      <div class="app">
        <svg preserveAspectRatio="none" viewBox="402.500 72 278.800 288"><path d="M452 113h190v175H452z" fill="#fff" /><path d="M459 121h176v160H459z" fill="#a5834f" /><path d="m424 157 187-29 23 157-186 29z" fill="#fff" /><path d="m431 162 174-27 8 54-173 26z" fill="#98c0fb" /><path d="m439 212 173-24 6 31-173 40z" fill="#1c3a7e" /><path d="m443 238 174-21 10 62-174 27z" fill="#d9e8f2" /><path d="m443 236 28-4 12 12-28 10zM454 290q40-8 54 8l-54 8zM530 236q20-14 34 0l-8 16z" fill="#5a4630" /><path d="M566 246q0-16 46-16t46 16v40q-4 38-46 38t-46-38z" fill="url(#can)" /><circle cx="609" cy="243" r="46" fill="#adb6bd" stroke="#3e4348" stroke-width="5" /><circle cx="609" cy="244" r="37" fill="#8fa9c2" /><path d="M574 236q30 14 70 0 4 24-16 38-34 12-52-18z" fill="#6d5238" /><path d="M574 234q34-26 70 0-20 20-70 0z" fill="#eaf0f6" /></svg>
      </div>
      <i class="sep second"></i>
      <div class="app">
        <svg preserveAspectRatio="none" viewBox="793.400 72 278.800 288"><path d="M811 128q0-8 8-8h58q6 0 9 6l9 12h144q9 0 9 9v60H811z" fill="#437f9d" /><path d="M811 157q0-7 7-7h223q7 0 7 7v149q0 6-6 6H817q-6 0-6-6z" fill="url(#dl)" /><path d="M811 293h237M811 299h237" stroke="#5ba3c6" stroke-width="1.500" /><ellipse cx="929" cy="224" rx="53" ry="55" fill="#4297c4" /><path d="M916 195h26v32h16l-29 34-29-34h16z" fill="#73bce0" /></svg>
      </div>
      <div class="app">
        <svg preserveAspectRatio="none" viewBox="1062.300 72 278.800 288"><path d="m1104 122 26 188q6 23 66 23t66-23l25-188z" fill="url(#tr)" /><path d="M1128 296q30-14 70 20l30 12q-88 12-98-18z" fill="#b5b7b8" opacity=".45" /><ellipse cx="1196" cy="122" rx="91" ry="22" fill="#4a4f57" stroke="#8d9195" stroke-width="2.500" /></svg>
      </div>
    </footer>
  </div>
</template>

<style>
body {
  overflow: hidden;
}
</style>

<style scoped>
* {
  box-sizing: border-box;
}
.desktop {
  width: 2560px;
  height: 1600px;
  display: flex;
  flex-direction: column;
  overflow: hidden;
  background: linear-gradient(90deg, #03060d, #04101f 98%, #071a30);
  font-family: Inter, 'Liberation Sans', sans-serif;
  color: #fff;
  white-space: nowrap;
}
svg {
  display: block;
  flex: none;
  overflow: visible;
}
span,
i {
  flex: none;
}
.slot {
  display: flex;
}
.menubar {
  flex: none;
  height: 46px;
  padding: 0 46px 0 42px;
  display: flex;
  align-items: center;
  background: linear-gradient(90deg, #1e2a44, #1a233a 50%, #191d2d);
  border-bottom: 2px solid #070b16;
  font-size: 28px;
  font-weight: 500;
}
.apple {
  width: 26px;
  height: 32px;
  margin-top: -4px;
}
.menus {
  display: flex;
  margin-left: 41px;
}
.strong {
  font-weight: 700;
}
.status {
  display: flex;
  align-items: center;
  margin-left: auto;
}
.airplay {
  width: 36px;
  height: 28px;
}
.wifi {
  width: 42px;
  height: 30px;
  margin-left: 22px;
}
.percent {
  margin-left: 22px;
  font-size: 24px;
}
.battery {
  width: 46px;
  height: 25px;
  margin-left: 7px;
}
.clock {
  margin-left: 34px;
}
.user {
  margin-left: 26px;
  font-weight: 600;
}
.search {
  width: 30px;
  height: 29px;
  margin-left: 30px;
}
.siri {
  width: 32px;
  height: 32px;
  margin-left: 33px;
}
.list {
  width: 36px;
  height: 20px;
  margin-left: 24px;
}

.window {
  flex: none;
  height: 1442px;
  display: flex;
  flex-direction: column;
  overflow: hidden;
  border-radius: 10px;
  background: #323234;
}
.tabstrip {
  flex: none;
  height: 66px;
  display: flex;
  align-items: center;
  border-top: 2px solid #6d6e6e;
  background: #0c0c0d;
  border-radius: 10px 10px 0 0;
}
.lights {
  width: 210px;
  padding: 0 0 2px 26px;
  display: flex;
  gap: 16px;
}
.lights i {
  width: 24px;
  height: 24px;
  border-radius: 50%;
}
.red {
  background: #fc605c;
}
.amber {
  background: #fdbc40;
}
.green {
  background: #34c84a;
}
.tab {
  width: 450px;
  height: 66px;
  margin-top: -2px;
  padding: 0 24px 0 18px;
  display: flex;
  align-items: center;
  justify-content: space-between;
  border-top: 4px solid #0a84ff;
  border-left: 2px solid #3d3d3f;
  background: #323234;
  font-size: 22px;
  font-weight: 500;
}
.tabclose {
  width: 20px;
  height: 20px;
  margin-top: -2px;
}
.plus {
  width: 28px;
  height: 28px;
  margin: -2px 0 0 20px;
}
.toolbar {
  flex: none;
  height: 82px;
  display: flex;
  align-items: center;
  padding-left: 8px;
}
.line {
  fill: none;
  stroke-width: 3.600;
  stroke-linecap: round;
  stroke-linejoin: round;
}
.back {
  width: 64px;
  height: 64px;
  border-radius: 50%;
  background: #656566;
  box-shadow: 0 0 0 2px #272729;
  display: flex;
  align-items: center;
  justify-content: center;
}
.back svg,
.tool {
  width: 32px;
  height: 32px;
}
.forward {
  margin-left: 18px;
}
.reload {
  margin-left: 32px;
}
.home {
  margin-left: 32px;
}
.urlbar {
  width: 1362px;
  height: 60px;
  margin-left: 246px;
  padding-left: 15px;
  display: flex;
  align-items: center;
  border: 2px solid #59595b;
  border-radius: 8px;
  background: #474749;
  font-size: 27px;
}
.shield {
  width: 26px;
  height: 28px;
}
.divider {
  width: 2px;
  height: 42px;
  margin-left: 15px;
  background: #60606a;
}
.info {
  width: 28px;
  height: 28px;
  margin-left: 14px;
}
.host {
  margin-left: 18px;
}
.port {
  color: #a3a3a4;
}
.dots {
  width: 34px;
  height: 10px;
  margin-left: auto;
}
.pocket {
  width: 32px;
  height: 28px;
  margin-left: 24px;
}
.star {
  width: 32px;
  height: 32px;
  margin: 0 11px 0 24px;
}
.library {
  width: 32px;
  height: 28px;
  margin-left: 247px;
}
.side {
  width: 32px;
  height: 28px;
  margin-left: 31px;
}
.account {
  width: 28px;
  height: 28px;
  margin-left: 34px;
}
.ublock {
  width: 30px;
  height: 32px;
  margin-left: 35px;
}
.code {
  width: 30px;
  height: 28px;
  margin-left: 34px;
}
.green-arrow {
  width: 32px;
  height: 31px;
  margin-left: 33px;
}
.tooldivider {
  width: 2px;
  height: 68px;
  margin-left: 22px;
  background: #59595b;
}
.burger {
  width: 24px;
  height: 24px;
  margin-left: 30px;
}
.bookmarks {
  flex: none;
  height: 44px;
  padding: 0 0 4px 20px;
  display: flex;
  align-items: center;
  border-bottom: 2px solid #0c0c0d;
  font-size: 22px;
  font-weight: 500;
}
.bmdivider {
  width: 2px;
  height: 28px;
  margin-right: 20px;
  background: #1f1f21;
}
.bookmark {
  display: flex;
  align-items: center;
  flex: none;
}
.bookmark svg {
  width: 32px;
  height: 32px;
  margin-right: 8px;
}
.indented {
  margin-left: 4px;
}
.more {
  width: 28px;
  height: 26px;
  margin-left: 83px;
}

.page {
  flex: 1;
  display: flex;
  flex-direction: column;
  background: linear-gradient(#fff, #fff 94%, #ececec);
  color: #333;
  font-family: 'Liberation Sans', Arial, sans-serif;
  font-size: 28px;
}
h1,
h3,
h5,
p {
  margin: 0;
  font-weight: 400;
  line-height: 40px;
}
h1 span,
h3 span,
h5 span,
p span,
button span {
  display: inline-block;
}
h1 {
  height: 139px;
  padding: 42px 0 0 3px;
  text-align: center;
  font-size: 72px;
  line-height: 80px;
  -webkit-text-stroke: 2px #333;
}
.navbar {
  height: 100px;
  padding-left: 30px;
  border: 2px solid #e7e7e7;
  border-radius: 8px;
  background: #f8f8f8;
}
.breadcrumb {
  width: 319px;
  height: 92px;
  padding: 3px 0 0 30px;
  display: flex;
  align-items: center;
  border-radius: 8px;
  background: #f5f5f5;
}
.slash {
  color: #ccc;
}
.columns {
  flex: 1;
  display: flex;
  align-items: flex-start;
}
.sidebar {
  width: 427px;
  align-self: stretch;
  padding: 20px 30px;
  background: linear-gradient(#bbb, #bbb 92%, #aeaeae);
}
button {
  border: 0;
  padding: 0;
  font: inherit;
  color: inherit;
}
.big {
  display: block;
  width: 100%;
  height: 92px;
  padding: 3px 0 0 1px;
  border-radius: 12px;
  background: #efefef;
  font-size: 36px;
}
.panel {
  width: 1322px;
  height: 623px;
  margin-left: 405px;
  border: 2px solid #ddd;
  border-radius: 8px;
  background: #fff;
  box-shadow: 0 2px 2px rgba(0, 0, 0, 0.05);
}
.panel-heading {
  height: 77px;
  padding: 4px 0 0 30px;
  display: flex;
  align-items: center;
  border-bottom: 2px solid #ddd;
  border-radius: 6px 6px 0 0;
  background: #f5f5f5;
  font-size: 32px;
  -webkit-text-stroke: 0.9px #333;
}
.panel-body {
  padding: 52px 30px 0;
}
h3 {
  font-size: 36px;
  -webkit-text-stroke: 1px #333;
}
p {
  margin-top: 20px;
}
h5 {
  margin-top: 15px;
  font-size: 28px;
  -webkit-text-stroke: 0.9px #333;
}
.owner {
  margin-top: 11px;
}
.actions {
  margin-top: 94px;
  display: flex;
  gap: 7px;
}
.btn {
  height: 68px;
  padding-top: 1px;
  border: 2px solid;
  border-radius: 8px;
  color: #fff;
}
.update {
  width: 145px;
  background: #337ab7;
  border-color: #2e6da4;
}
.delete {
  width: 132px;
  background: #d9534f;
  border-color: #d43f3a;
}

.dock {
  flex: none;
  width: 2413px;
  height: 110px;
  margin: 2px 0 0 73px;
  padding: 0 0 0 4.700px;
  display: flex;
  align-items: flex-start;
  border: 2px solid #343946;
  border-bottom: 0;
  border-radius: 12px 12px 0 0;
  background: linear-gradient(#131822, #101b27);
}
.defs {
  width: 0;
}
.app {
  width: 92.600px;
  flex: none;
  display: flex;
  flex-direction: column;
  align-items: center;
  padding-top: 2px;
}
.app svg {
  width: 96px;
  height: 96px;
}
.running::after {
  content: '';
  width: 8px;
  height: 8px;
  margin-top: -2px;
  border-radius: 50%;
  background: #959ba6;
}
.petals rect {
  mix-blend-mode: multiply;
}
.sep {
  width: 2px;
  height: 82px;
  margin: 12px 20.700px 0;
  background: #4b515b;
}
.second {
  margin: 12px 20px 0;
}
</style>
